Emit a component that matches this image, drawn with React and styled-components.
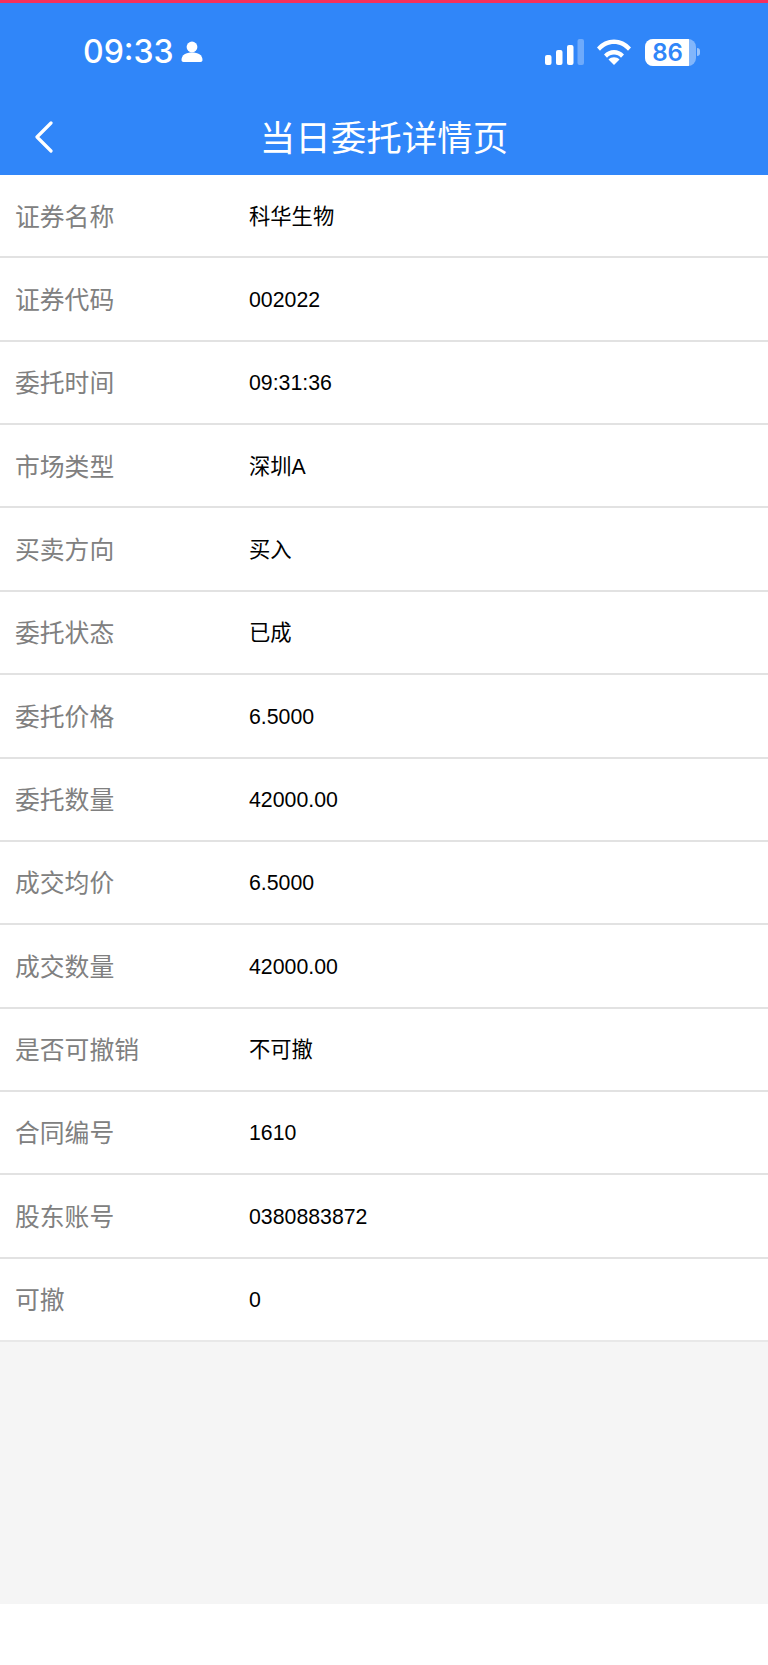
import React from 'react';
import styled, { createGlobalStyle } from 'styled-components';

const rows = [
  ['证券名称', '科华生物'],
  ['证券代码', '002022'],
  ['委托时间', '09:31:36'],
  ['市场类型', '深圳A'],
  ['买卖方向', '买入'],
  ['委托状态', '已成'],
  ['委托价格', '6.5000'],
  ['委托数量', '42000.00'],
  ['成交均价', '6.5000'],
  ['成交数量', '42000.00'],
  ['是否可撤销', '不可撤'],
  ['合同编号', '1610'],
  ['股东账号', '0380883872'],
  ['可撤', '0'],
];

const GlobalStyle = createGlobalStyle`
  html, body {
    margin: 0;
    padding: 0;
    background: #fff;
  }
  body {
    font-family: "Liberation Sans", "Noto Sans CJK SC", sans-serif;
  }
`;

const Page = styled.div`
  width: 768px;
  height: 1665px;
  display: flex;
  flex-direction: column;
  background: #fff;
  overflow: hidden;
`;

const Header = styled.header`
  height: 172px;
  flex: none;
  border-top: 3px solid #f5305c;
  background: #3086f9;
  color: #fff;
  display: flex;
  flex-direction: column;
`;

const StatusBar = styled.div`
  height: 94px;
  display: flex;
  justify-content: space-between;
  align-items: flex-start;
  padding: 33px 68px 0 83px;
  box-sizing: border-box;
`;

const Clock = styled.div`
  display: flex;
  align-items: center;
  gap: 7px;
  font-family: Inter, "Liberation Sans", sans-serif;
  font-size: 32px;
  font-weight: 500;
  line-height: 32px;
`;

const StatusIcons = styled.div`
  display: flex;
  align-items: center;
  gap: 13px;
  height: 32px;
`;

const Battery = styled.div`
  position: relative;
  width: 51px;
  height: 27px;
  border-radius: 8px;
  overflow: hidden;
  background: rgba(255, 255, 255, 0.4);
`;

const BatteryFill = styled.div`
  position: absolute;
  inset: 0 7px 0 0;
  background: #fff;
`;

const BatteryLevel = styled.span`
  position: absolute;
  inset: 0 6px 0 0;
  text-align: center;
  color: #3086f9;
  font-family: Inter, "Liberation Sans", sans-serif;
  font-size: 24px;
  font-weight: 600;
  line-height: 27px;
`;

const BatteryGroup = styled.div`
  display: flex;
  align-items: center;
  gap: 1px;
  margin-left: 1px;
`;

const BatteryTip = styled.div`
  width: 3px;
  height: 8px;
  border-radius: 0 3px 3px 0;
  background: rgba(255, 255, 255, 0.5);
`;

const NavBar = styled.div`
  flex: 1;
  position: relative;
  display: flex;
  align-items: center;
  justify-content: center;
`;

const BackButton = styled.svg`
  position: absolute;
  left: 34px;
  top: 24px;
`;

const Title = styled.h1`
  margin: 0;
  font-size: 35.5px;
  font-weight: 400;
  line-height: 50px;
  font-family: "Noto Sans CJK SC", sans-serif;
`;

const List = styled.div`
  flex: none;
  background: #fff;
`;

const Row = styled.div`
  height: 83.36px;
  box-sizing: border-box;
  display: flex;
  align-items: baseline;
  padding: 21.5px 0 0 15px;
  border-bottom: 2px solid #e2e2e2;

  &:last-child {
    border-bottom-color: #e8e8e8;
  }
`;

const Label = styled.span`
  width: 234px;
  flex: none;
  color: #808080;
  font-size: 24.8px;
  font-family: "Noto Sans CJK SC", sans-serif;
`;

const Value = styled.span`
  color: #000;
  font-size: 21.3px;
  font-family: "Liberation Sans", "Noto Sans CJK SC", sans-serif;
  transform: translateY(-2px);
`;

const Filler = styled.div`
  flex: none;
  height: 262px;
  background: #f5f5f5;
`;

const PersonIcon = () => (
  <svg width="22" height="22" viewBox="0 0 22 22" fill="#fff">
    <circle cx="11" cy="6" r="5.4" />
    <path d="M0.5 19c0-5 4.6-7.4 10.500-7.400S21.500 14 21.500 19c0 1.300-.8 2-2 2h-17c-1.200 0-2-.7-2-2z" />
  </svg>
);

const SignalIcon = () => (
  <svg width="39" height="26" viewBox="0 0 39 26" fill="#fff">
    <rect x="0" y="16" width="6.500" height="10" rx="2" />
    <rect x="11" y="11" width="6.500" height="15" rx="2" />
    <rect x="22" y="6" width="6.500" height="20" rx="2" />
    <rect x="32.500" y="0" width="6.500" height="26" rx="2" opacity="0.3" />
  </svg>
);

const WifiIcon = () => (
  <svg width="34" height="26" viewBox="0 0 34 26" fill="#fff">
    <path d="M0 8.500C4.500 3.400 10.500 0.500 17 0.500s12.500 2.900 17 8l-3 3.200C27.300 7.500 22.500 5 17 5S6.700 7.500 3 11.700z" />
    <path d="M7 15.500c2.700-2.900 6.200-4.500 10-4.500s7.300 1.600 10 4.500l-3 3.200c-1.900-2-4.300-3.200-7-3.200s-5.100 1.200-7 3.200z" />
    <path d="M11.500 20.500c1.500-1.400 3.400-2.200 5.500-2.200s4 .8 5.500 2.200L17 26z" />
  </svg>
);

const App = () => (
  <Page>
    <GlobalStyle />
    <Header>
      <StatusBar>
        <Clock>
          09:33
          <PersonIcon />
        </Clock>
        <StatusIcons>
          <SignalIcon />
          <WifiIcon />
          <BatteryGroup>
            <Battery>
              <BatteryFill />
              <BatteryLevel>86</BatteryLevel>
            </Battery>
            <BatteryTip />
          </BatteryGroup>
        </StatusIcons>
      </StatusBar>
      <NavBar>
        <BackButton width="20" height="32" viewBox="0 0 20 32" fill="none" stroke="#fff" strokeWidth="3.200" strokeLinecap="round" strokeLinejoin="round">
          <path d="M17 2L3 16l14 14" />
        </BackButton>
        <Title>当日委托详情页</Title>
      </NavBar>
    </Header>
    <List>
      {rows.map(([label, value]) => (
        <Row key={label}>
          <Label>{label}</Label>
          <Value>{value}</Value>
        </Row>
      ))}
    </List>
    <Filler />
  </Page>
);

export default App;
